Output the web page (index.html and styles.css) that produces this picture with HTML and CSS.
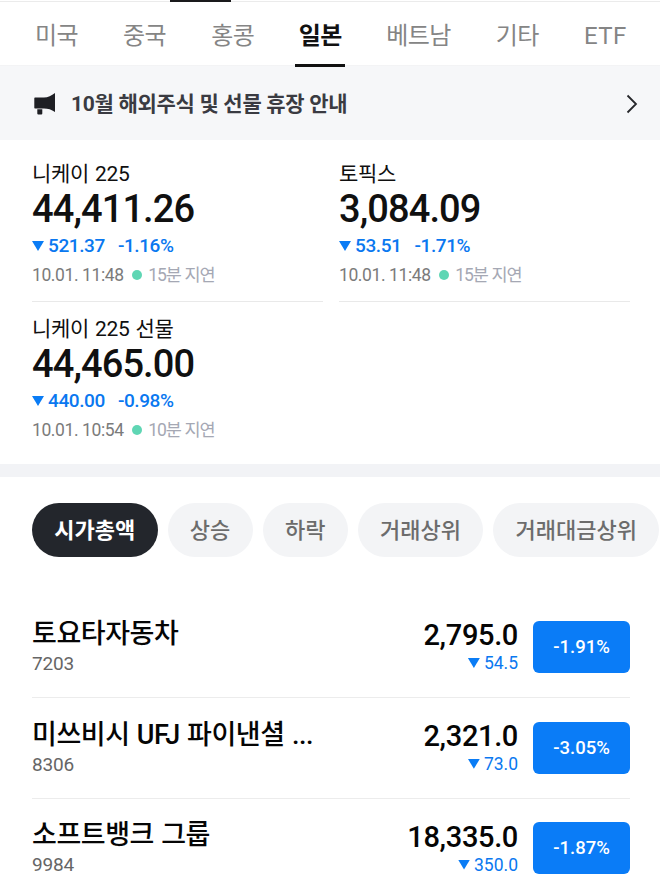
FILE: index.html
```html
<!DOCTYPE html>
<html lang="ko">
<head>
  <meta charset="UTF-8" />
  <meta name="viewport" content="width=device-width, initial-scale=1" />
  <title>해외증시 - 일본</title>
  <link rel="stylesheet" href="styles.css">
</head>
<body>

  <div class="top-line"><span class="top-active"></span></div>

  <nav class="tabs">
    <a class="tab">미국</a>
    <a class="tab">중국</a>
    <a class="tab">홍콩</a>
    <a class="tab active">일본</a>
    <a class="tab">베트남</a>
    <a class="tab">기타</a>
    <a class="tab latin">ETF</a>
  </nav>

  <a class="notice">
    <svg class="horn" width="22" height="22" viewBox="0 0 22 22">
      <path d="M1 4.500h9c4 0 7.500-1.800 11-4.500v19c-3.500-2.500-7-3.500-11-3.500H1a.7.7 0 0 1-.7-.7V5.200A.7.7 0 0 1 1 4.500z" fill="#1e1f24"/>
      <path d="M3.300 16.300h5v4.200a1 1 0 0 1-1 1h-3a1 1 0 0 1-1-1z" fill="#1e1f24"/>
    </svg>
    <span class="notice-text">10월 해외주식 및 선물 휴장 안내</span>
    <svg class="chevron" width="12" height="20" viewBox="0 0 12 20">
      <path d="M1.500 1.500L10 10l-8.500 8.500" fill="none" stroke="#26272b" stroke-width="1.800"/>
    </svg>
  </a>

  <section class="indices">
    <div class="index lined">
      <div class="index-name">니케이 225</div>
      <div class="index-value">44,411.26</div>
      <div class="index-change"><i class="down"></i><span>521.37</span><span class="rate">-1.16%</span></div>
      <div class="index-meta">10.01. 11:48<i class="dot"></i><span class="delay">15분 지연</span></div>
    </div>
    <div class="index lined">
      <div class="index-name">토픽스</div>
      <div class="index-value">3,084.09</div>
      <div class="index-change"><i class="down"></i><span>53.51</span><span class="rate">-1.71%</span></div>
      <div class="index-meta">10.01. 11:48<i class="dot"></i><span class="delay">15분 지연</span></div>
    </div>
    <div class="index">
      <div class="index-name">니케이 225 선물</div>
      <div class="index-value">44,465.00</div>
      <div class="index-change"><i class="down"></i><span>440.00</span><span class="rate">-0.98%</span></div>
      <div class="index-meta">10.01. 10:54<i class="dot"></i><span class="delay">10분 지연</span></div>
    </div>
  </section>

  <div class="filters">
    <button class="pill on">시가총액</button>
    <button class="pill">상승</button>
    <button class="pill">하락</button>
    <button class="pill">거래상위</button>
    <button class="pill">거래대금상위</button>
  </div>

  <ul class="stocks">
    <li class="stock">
      <div class="info">
        <div class="name">토요타자동차</div>
        <div class="code">7203</div>
      </div>
      <div class="quote">
        <div class="price">2,795.0</div>
        <div class="diff"><i class="down"></i>54.5</div>
      </div>
      <div class="badge">-1.91%</div>
    </li>
    <li class="stock">
      <div class="info">
        <div class="name">미쓰비시 UFJ 파이낸셜 ...</div>
        <div class="code">8306</div>
      </div>
      <div class="quote">
        <div class="price">2,321.0</div>
        <div class="diff"><i class="down"></i>73.0</div>
      </div>
      <div class="badge">-3.05%</div>
    </li>
    <li class="stock">
      <div class="info">
        <div class="name">소프트뱅크 그룹</div>
        <div class="code">9984</div>
      </div>
      <div class="quote">
        <div class="price">18,335.0</div>
        <div class="diff"><i class="down"></i>350.0</div>
      </div>
      <div class="badge">-1.87%</div>
    </li>
  </ul>

</body>
</html>
```

FILE: styles.css
```css
* {
  box-sizing: border-box;
}
body {
  margin: 0;
  height: 894px;
  overflow: hidden;
  background: #fff;
  color: #101010;
  font-family: Roboto, 'Noto Sans CJK KR', sans-serif;
  white-space: nowrap;
}
.top-line {
  height: 2px;
  padding-left: 170px;
  background: linear-gradient(#fff 50%, #ebebeb 50%);
}
.top-active {
  display: block;
  width: 61px;
  height: 2px;
  background: #1a1a1c;
}

/* country tabs */
.tabs {
  display: flex;
  height: 65px;
  padding-left: 31px;
  gap: 37px;
  background: linear-gradient(#fff 63px, #f0f0f1 63px, #f6f7f9 64px);
}
.tab {
  padding: 0 4px;
  font-size: 24px;
  line-height: 69px;
  letter-spacing: -0.55px;
  color: #858585;
}
.tab.latin {
  letter-spacing: 0.4px;
}
.tab.active {
  padding: 0 3.5px;
  color: #111;
  font-weight: 700;
  border-bottom: 3px solid #111;
}

/* notice */
.notice {
  display: flex;
  align-items: center;
  height: 73px;
  padding: 0 22px 0 34px;
  background: #f6f7f9;
}
.notice-text {
  flex: 1;
  margin-left: 15px;
  font-size: 21px;
  font-weight: 700;
  line-height: 30px;
  letter-spacing: -0.3px;
  color: #3a3b42;
}

/* indices */
.indices {
  display: grid;
  grid-template-columns: 291px 291px;
  column-gap: 16px;
  row-gap: 13px;
  height: 337px;
  align-content: start;
  padding: 20px 30px 0 32px;
  border-bottom: 13px solid #f2f3f6;
}
.index.lined {
  padding-bottom: 13px;
  border-bottom: 1px solid #e9e9e9;
}
.index-name {
  font-size: 21px;
  line-height: 28px;
  letter-spacing: -0.3px;
  word-spacing: 1px;
}
.index-value {
  font-size: 38px;
  font-weight: 500;
  line-height: 42px;
  letter-spacing: -0.9px;
}
.index-change {
  display: flex;
  align-items: center;
  font-size: 19px;
  font-weight: 500;
  line-height: 32px;
  letter-spacing: -0.4px;
  color: #0a78f0;
}
.down {
  width: 12px;
  height: 10px;
  margin-right: 4px;
  background: #0a7cf5;
  clip-path: polygon(0 0, 100% 0, 50% 100%);
}
.rate {
  margin-left: 13px;
}
.index-meta {
  display: flex;
  align-items: center;
  font-size: 17.5px;
  line-height: 26px;
  letter-spacing: -0.4px;
  color: #7b7b7b;
}
.dot {
  width: 10px;
  height: 10px;
  margin: 0 6.5px 0 8px;
  border-radius: 50%;
  background: #5fd6b4;
}
.delay {
  font-size: 17.5px;
  letter-spacing: -1.1px;
  word-spacing: 0.5px;
  color: #a5a8b4;
}

/* sort pills */
.filters {
  display: flex;
  gap: 10px;
  padding: 26px 0 0 32px;
}
.pill {
  flex: none;
  height: 54px;
  padding: 1px 22.3px 0 22.3px;
  border: none;
  border-radius: 27px;
  background: #f3f4f6;
  font-family: inherit;
  font-size: 22px;
  font-weight: 500;
  line-height: 54px;
  color: #6c6c6c;
}
.pill.on {
  background: #23262c;
  color: #fff;
  font-weight: 700;
}

/* stock list */
.stocks {
  list-style: none;
  margin: 40px 30px 0 32px;
  padding: 0;
}
.stock {
  display: flex;
  align-items: center;
  height: 100.8px;
  border-bottom: 1px solid #ececec;
}
.info {
  flex: 1;
}
.name {
  font-size: 27px;
  font-weight: 500;
  line-height: 34px;
  letter-spacing: -0.45px;
  word-spacing: 1px;
  color: #050505;
}
.code {
  font-size: 19px;
  line-height: 26px;
  letter-spacing: -0.2px;
  color: #666;
}
.quote {
  padding-bottom: 1.8px;
  text-align: right;
}
.price {
  font-size: 29px;
  font-weight: 500;
  line-height: 34px;
  letter-spacing: -0.35px;
  color: #050505;
}
.diff {
  display: flex;
  align-items: center;
  justify-content: flex-end;
  font-size: 17.5px;
  line-height: 22px;
  color: #0a78f0;
}
.badge {
  width: 97px;
  height: 52px;
  margin: 0 0 0.4px 15px;
  border-radius: 6px;
  background: #0a7cf7;
  color: #fff;
  font-size: 18.5px;
  font-weight: 500;
  line-height: 52px;
  text-align: center;
}
```
